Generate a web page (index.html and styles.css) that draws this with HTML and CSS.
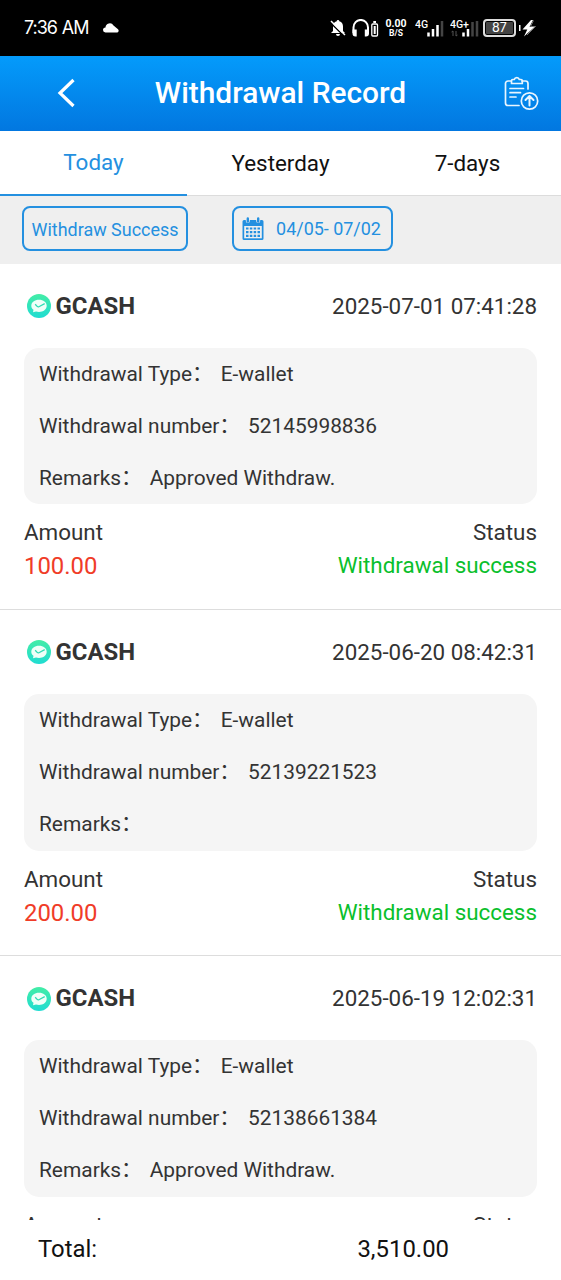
FILE: index.html
```html
<!DOCTYPE html>
<html lang="en">
<head>
<meta charset="utf-8">
<title>Withdrawal Record</title>
<link rel="stylesheet" href="styles.css">
</head>
<body>
<svg class="defs" width="0" height="0">
  <defs>
    <linearGradient id="mint" x1="0" y1="0" x2="0" y2="1"><stop offset="0" stop-color="#43eda6"/><stop offset="1" stop-color="#1fdcd2"/></linearGradient>
    <symbol id="wallet" viewBox="0 0 24 24">
      <circle cx="12" cy="12" r="12" fill="url(#mint)"/>
      <path d="M12 5.800c4.300 0 7.700 2.400 7.700 6s-3.400 6.200-7.700 6.200c-1.100 0-2.100-.1-3-.4L6 18.300l.5-2.500C5 14.700 4.300 13.400 4.300 11.800c0-3.600 3.400-6 7.700-6z" fill="#effff8"/>
      <path d="M8.200 10.300l2.200 2.300c.5.400 1 .4 1.500.1l5.800-3" fill="none" stroke="#2fdcb4" stroke-width="1.300"/>
    </symbol>
  </defs>
</svg>
<div class="screen">
  <div class="statusbar">
    <span class="clock">7:36 AM</span>
    <svg class="cloud" width="16" height="10" viewBox="0 0 16 10"><path d="M2.500 9.500a2.500 2.500 0 0 1 0-5A4.300 4.300 0 0 1 10.500 2.500L15 6.200a1.900 1.900 0 0 1-1 3.300z" fill="#fff"/></svg>
    <div class="status-icons">
      <svg width="16" height="18" viewBox="0 0 16 18"><path d="M8 1a1.300 1.300 0 0 1 1.300 1.300C12 3 13 5 13 7.500V12l2 2H1l2-2V7.500C3 5 4 3 6.700 2.300A1.300 1.300 0 0 1 8 1zM6 15h4a2 2 0 0 1-4 0z" fill="#fff"/><path d="M0 3.200L14 17" stroke="#000" stroke-width="1.500"/><path d="M1 2l14 14" stroke="#fff" stroke-width="1.500"/></svg>
      <svg class="headset" width="27" height="18" viewBox="0 0 27 18"><path d="M1.500 14V8.500a7 7.300 0 0 1 14.500 0V14" fill="none" stroke="#fff" stroke-width="2"/><path d="M.5 10.500h4.200V17.500H3.500a3 3 0 0 1-3-3zM12.800 10.500H17v4a3 3 0 0 1-3 3h-1.200z" fill="#fff"/><rect x="19.800" y="5" width="5.700" height="12" rx="1" fill="none" stroke="#fff" stroke-width="1.300"/><path d="M21.300 3h2.700M22.700 7v8" stroke="#fff" stroke-width="2"/></svg>
      <div class="rate"><b>0.00</b><b class="unit">B/S</b></div>
      <svg class="signal-one" width="29" height="18" viewBox="0 0 29 18"><text x="0" y="8.500" class="net">4G</text><path d="M13.500 13.500v4M18 10v7.500M22.500 6v11.500" stroke="#fff" stroke-width="2.500"/><path d="M27 2v15.500" stroke="#444" stroke-width="2.500"/></svg>
      <svg class="signal-two" width="29" height="18" viewBox="0 0 29 18"><path d="M22.500 3v14.500M27 2v15.500" stroke="#444" stroke-width="2.500"/><text x="0" y="8.500" class="net">4G+</text><path d="M3 17v-5l-1.500 1M6 12v5l1.500-1" stroke="#555" fill="none"/><path d="M13.500 13.500v4M18 10v7.500" stroke="#fff" stroke-width="2.500"/></svg>
      <div class="battery">87</div>
      <svg width="17" height="18" viewBox="0 0 17 18"><path d="M0 6v6" stroke="#fff" stroke-width="3"/><path d="M12 1L3.500 10.500h4.800L5 17.500 15.500 8h-5l3.500-7z" fill="#fff"/><path d="M14.500 1.500l-3 6h5L8 16" fill="none" stroke="#777"/></svg>
    </div>
  </div>
  <header class="header">
    <svg class="back" width="20" height="32" viewBox="0 0 20 32"><path d="M18.500 2L5 15l13.500 13" fill="none" stroke="#fff" stroke-width="3.200"/></svg>
    <h1 class="title">Withdrawal Record</h1>
    <svg class="report" width="36" height="36" viewBox="0 0 36 36" fill="none" stroke="#e9f5ff" stroke-width="1.700" stroke-linecap="round" stroke-linejoin="round"><path d="M8 5H5a2.500 2.500 0 0 0-2.500 2.500V27A2.500 2.500 0 0 0 5 29.500h11M19 5h3.500A2.500 2.500 0 0 1 25 7.500V13"/><path d="M8.500 7.500V4.800c0-.8.500-1.300 1.300-1.300h1.500a2.600 2.600 0 0 1 5 0H18c.8 0 1.300.5 1.300 1.300v2.700z"/><path d="M7 12.500h13.500M7 16.700h10.500M7 21h6"/><circle cx="26.500" cy="25" r="8.200"/><path d="M26.500 29.500v-9M22.500 24l4-4 4 4" stroke-width="2"/></svg>
  </header>
  <nav class="tabs">
    <div class="tab active">Today</div>
    <div class="tab">Yesterday</div>
    <div class="tab">7-days</div>
  </nav>
  <div class="filters">
    <div class="filter status-filter">Withdraw Success</div>
    <div class="filter date-filter">
      <svg width="22" height="24" viewBox="0 0 22 24"><path d="M2 3h18a1.500 1.500 0 0 1 1.500 1.500v17A1.500 1.500 0 0 1 20 23H2A1.500 1.500 0 0 1 .5 21.500v-17A1.500 1.500 0 0 1 2 3z" fill="#2490e0"/><path d="M2.200 9h17.600v12.300H2.200z" fill="#efefef"/><path d="M5.800 1v3M16.200 1v3" stroke="#efefef" stroke-width="4" stroke-linecap="round"/><path d="M5.800 1.500v3M16.200 1.500v3" stroke="#2490e0" stroke-width="2.400" stroke-linecap="round"/><path d="M4 11.500h14M4 15.200h14M4 18.900h14" stroke="#2490e0" stroke-width="2.200" stroke-dasharray="2.500 1.330"/></svg>
      <span>04/05- 07/02</span>
    </div>
  </div>
  <main class="records">
    <article class="record">
      <div class="record-head"><svg class="logo"><use href="#wallet"/></svg><strong>GCASH</strong><time>2025-07-01 07:41:28</time></div>
      <div class="details"><p>Withdrawal Type<span class="colon">：</span> E-wallet</p><p>Withdrawal number<span class="colon">：</span> 52145998836</p><p>Remarks<span class="colon">：</span> Approved Withdraw.</p></div>
      <div class="summary"><span>Amount</span><span>Status</span></div>
      <div class="summary"><span class="amount">100.00</span><span class="success">Withdrawal success</span></div>
    </article>
    <article class="record">
      <div class="record-head"><svg class="logo"><use href="#wallet"/></svg><strong>GCASH</strong><time>2025-06-20 08:42:31</time></div>
      <div class="details"><p>Withdrawal Type<span class="colon">：</span> E-wallet</p><p>Withdrawal number<span class="colon">：</span> 52139221523</p><p>Remarks<span class="colon">：</span></p></div>
      <div class="summary"><span>Amount</span><span>Status</span></div>
      <div class="summary"><span class="amount">200.00</span><span class="success">Withdrawal success</span></div>
    </article>
    <article class="record">
      <div class="record-head"><svg class="logo"><use href="#wallet"/></svg><strong>GCASH</strong><time>2025-06-19 12:02:31</time></div>
      <div class="details"><p>Withdrawal Type<span class="colon">：</span> E-wallet</p><p>Withdrawal number<span class="colon">：</span> 52138661384</p><p>Remarks<span class="colon">：</span> Approved Withdraw.</p></div>
      <div class="summary"><span>Amount</span><span>Status</span></div>
    </article>
  </main>
  <footer class="total"><span>Total:</span><span>3,510.00</span></footer>
</div>
</body>
</html>
```
FILE: styles.css
```css
* { box-sizing: border-box; }
body { margin: 0; background: #fff; font-family: Roboto, "Noto Sans CJK SC", sans-serif; color: #333; }
.defs { position: absolute; }
.screen { display: flex; flex-direction: column; width: 561px; height: 1280px; overflow: hidden; }
.statusbar { display: flex; align-items: center; flex: none; height: 56px; padding: 0 25px 0 24px; background: #000; color: #fff; }
.clock { width: 65px; font-family: Inter, Roboto, sans-serif; font-size: 18px; line-height: 58px; letter-spacing: -1.050px; word-spacing: 1px; white-space: nowrap; }
.cloud { margin-left: 14px; }
.status-icons { display: flex; align-items: center; margin-left: auto; }
.headset { margin-left: 6px; }
.rate { display: flex; flex-direction: column; align-items: center; width: 22px; margin-left: 6px; font-size: 10.500px; line-height: 10px; }
.unit { font-size: 8.500px; line-height: 9px; }
.net { font: 500 10.500px Roboto, sans-serif; fill: #fff; }
.signal-one { margin-left: 8px; }
.signal-two { margin-left: 6px; }
.battery { width: 33px; height: 18px; margin: 0 3px 0 4px; border: 2px solid #ddd; border-radius: 4px; background: #444; box-shadow: inset 0 0 0 1px #000; font: 12.500px/14px Inter, sans-serif; text-align: center; }
.header { display: flex; align-items: center; flex: none; height: 75px; padding: 0 22px 0 55px; background: linear-gradient(#049bfb, #0277e0); color: #fff; }
.title { flex: 1; margin: 0 17px 0 0; font-size: 29.900px; font-weight: 500; line-height: 36px; padding-bottom: 2px; text-align: center; white-space: nowrap; }
.tabs { display: flex; flex: none; height: 65px; border-bottom: 1px solid #dcdcdc; }
.tab { flex: 1; height: 65px; font-size: 22.400px; line-height: 64px; text-align: center; color: #111; }
.active { line-height: 63px; color: #2490e0; border-bottom: 2px solid #2490e0; }
.filters { display: flex; flex: none; gap: 44px; height: 68px; padding: 10px 22px; background: #efefef; }
.filter { display: flex; align-items: center; justify-content: center; height: 45px; border: 2px solid #2490e0; border-radius: 8px; color: #2490e0; font-size: 17.950px; }
.status-filter { width: 166px; padding-top: 2px; }
.date-filter { width: 161px; gap: 12px; padding-right: 2px; }
.date-filter span { padding-bottom: 1px; }
.records { flex: 1; overflow: hidden; min-height: 0; }
.record { height: 346.200px; padding: 0 24px; border-bottom: 1px solid #ddd; }
.record-head { display: flex; align-items: center; height: 83.500px; padding-left: 3px; font-size: 22.400px; }
.record-head strong { font-size: 23.900px; }
.logo { width: 24px; height: 24px; margin: 1px 4.500px 0 0; }
.record-head time { margin-left: auto; }
.details { padding: 0 15px; border-radius: 15px; background: #f5f5f5; }
.details p { margin: 0; height: 52.300px; font-size: 20.900px; line-height: 52.600px; white-space: nowrap; }
.colon { display: inline-block; margin-right: 2.500px; line-height: 20px; transform: translateY(-1.500px); }
.details + .summary { padding-top: 12px; height: 45px; }
.summary { display: flex; justify-content: space-between; height: 33px; font-size: 22.400px; line-height: 33px; }
.amount { color: #f03c28; font-size: 23.900px; line-height: 34px; }
.success { color: #0abf2c; }
.total { display: flex; flex: none; height: 60px; padding: 0 112px 0 38px; justify-content: space-between; background: #fff; color: #111; font-size: 23.900px; line-height: 59px; }
```
